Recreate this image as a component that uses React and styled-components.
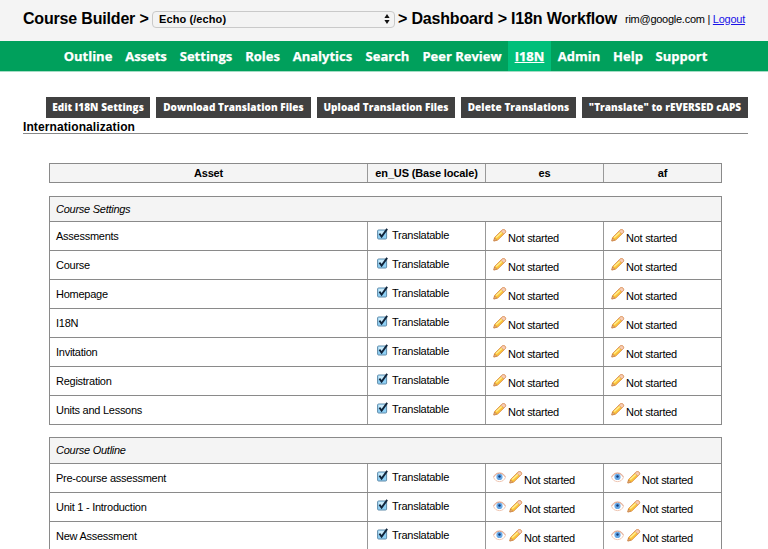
import React from "react";
import styled, { createGlobalStyle, css } from "styled-components";

const GlobalStyle = createGlobalStyle`
  * { box-sizing: border-box; }
  html, body { margin: 0; background: #fff; overflow: hidden; }
  body { font-family: "Liberation Sans", Arial, sans-serif; color: #000; }
`;

const Page = styled.div`
  width: 768px;
  height: 549px;
  overflow: hidden;
`;

const Header = styled.header`
  height: 41px;
  padding: 0 0 3px 23px;
  display: flex;
  align-items: center;
  background: #f4f4f4;
  white-space: nowrap;
`;

const Crumb = styled.span`
  width: ${(p) => p.$width}px;
  font-size: 16px;
  font-weight: bold;
  letter-spacing: -0.18px;
`;

const CourseSelect = styled.div`
  width: 243px;
  height: 17px;
  margin-right: 3px;
  padding: 0 4px 0 6px;
  display: flex;
  align-items: center;
  justify-content: space-between;
  border: 1px solid #c9c9c9;
  border-radius: 4px;
  background: #f3f3f3;
  font-size: 11px;
  font-weight: bold;
  letter-spacing: 0.1px;
`;

const Account = styled.span`
  font-size: 11px;
  line-height: 15px;
  letter-spacing: -0.26px;
`;

const Logout = styled.a`
  color: #1a12e8;
  text-decoration: underline;
`;

const Nav = styled.nav`
  height: 31px;
  padding-left: 57px;
  display: flex;
  background: #00a05c;
  border-bottom: 1px solid #a5dcc4;
`;

const NavItem = styled.a`
  width: ${(p) => p.$width}px;
  height: 30px;
  line-height: 30px;
  text-align: center;
  white-space: nowrap;
  color: #fff;
  font-family: "Open Sans", sans-serif;
  font-size: 13px;
  font-weight: 700;
  -webkit-text-stroke: 0.25px #fff;
  ${(p) => p.$active && css`
    background: #00bf7a;
    text-decoration: underline;
  `}
`;

const Toolbar = styled.div`
  margin: 25px 20px 0 46px;
  display: flex;
  justify-content: space-between;
`;

const ToolButton = styled.button`
  width: ${(p) => p.$width}px;
  height: 21px;
  padding: 0;
  border: 0;
  background: #404040;
  color: #fff;
  font-family: "Open Sans", sans-serif;
  font-size: 10px;
  font-weight: 800;
  letter-spacing: 0.05px;
  line-height: 21px;
  white-space: nowrap;
`;

const Title = styled.h1`
  height: 16px;
  margin: 0 20px 0 23px;
  border-bottom: 1px solid #888;
  font-size: 12px;
  line-height: 18px;
  font-weight: bold;
  letter-spacing: 0.1px;
`;

const Table = styled.div`
  width: 673px;
  margin: ${(p) => p.$top}px 0 0 49px;
  border: 1px solid #8a8a8a;
  border-bottom: 0;
  font-size: 11px;
  letter-spacing: -0.26px;
`;

const Row = styled.div`
  height: ${(p) => p.$height || 29}px;
  display: grid;
  grid-template-columns: 317px 118px 118px 118px;
  grid-template-rows: 100%;
  border-bottom: 1px solid #8a8a8a;
  ${(p) => p.$head && css`
    background: #f4f4f4;
    font-weight: bold;
    text-align: center;
    letter-spacing: -0.15px;
  `}
`;

const GroupName = styled.div`
  height: ${(p) => p.$height}px;
  padding-left: 6px;
  border-bottom: 1px solid #8a8a8a;
  background: #f4f4f4;
  line-height: 24px;
  font-style: italic;
`;

const HeadCell = styled.div`
  border-left: ${(p) => (p.$first ? 0 : 1)}px solid #999;
  line-height: 18px;
`;

const AssetCell = styled.div`
  padding-left: 6px;
  line-height: 28px;
`;

const LocaleCell = styled.div`
  display: flex;
  align-items: flex-start;
  overflow: hidden;
  padding-left: ${(p) => (p.$base ? 9 : 7)}px;
  border-left: 1px solid #999;
`;

const CellText = styled.span`
  margin-left: ${(p) => (p.$base ? 4 : 1)}px;
  line-height: ${(p) => (p.$base ? 26 : 32)}px;
`;

const Icon = styled.svg`
  flex: none;
  margin-top: ${(p) => p.$top}px;
  margin-right: ${(p) => p.$gap || 0}px;
`;

function SelectArrows() {
  return (
    <svg width="6" height="10" viewBox="0 0 6 10">
      <path d="M3 0L5.6 4H.4ZM3 10L.4 6H5.6Z" fill="#111" />
    </svg>
  );
}

function CheckIcon() {
  return (
    <Icon $top={6} width="11" height="12" viewBox="0 0 11 12">
      <rect x=".6" y="2" width="9" height="9" rx="1" fill="#8fd0f5" stroke="#5f8aa8" />
      <path d="M1.4 2.8H7.5V5L2 8Z" fill="#c9eafa" />
      <path d="M2.4 5.6L4.6 8.6L10.2 .9" fill="none" stroke="#10243a" strokeWidth="1.8" />
    </Icon>
  );
}

function PencilIcon() {
  return (
    <Icon $top={7} width="14" height="13" viewBox="0 0 14 13">
      <path d="M.8 12L1.6 8.4L9 1.1Q10.5 0 12 1.1Q13.2 2.5 12.2 3.8L4.8 11Z" fill="#fbc43a" stroke="#d98a45" strokeWidth=".8" />
      <path d="M9 1.1Q10.5 0 12 1.1Q13.2 2.5 12.2 3.8L11 5L7.8 2.3Z" fill="#f7cdb4" stroke="#d9936b" strokeWidth=".6" />
      <path d="M3.2 8.5L8.7 3.4" stroke="#ffef94" strokeWidth="1.4" />
      <path d="M.8 12L1.6 9L3.8 11.3Z" fill="#e9b98c" stroke="#b86d32" strokeWidth=".5" />
    </Icon>
  );
}

function EyeIcon() {
  return (
    <Icon $top={8} $gap={3} width="13" height="11" viewBox="0 0 13 11">
      <path d="M.5 5.2Q2.2 .8 6.5 .8T12.5 5.2Q10.8 9.6 6.5 9.6T.5 5.2Z" fill="#fff" stroke="#efc6b3" strokeWidth="1" />
      <path d="M.8 4.8Q2.8 1.2 6.5 1.2T12.2 4.8" fill="none" stroke="#d89c84" strokeWidth=".9" />
      <circle cx="6.5" cy="4.9" r="3.1" fill="#68a9e6" />
      <circle cx="6.5" cy="4.5" r="1.2" fill="#123a78" />
    </Icon>
  );
}

const navItems = [
  ["Outline", 62], ["Assets", 54], ["Settings", 66], ["Roles", 47],
  ["Analytics", 73], ["Search", 57], ["Peer Review", 92], ["I18N", 43],
  ["Admin", 56], ["Help", 42], ["Support", 65],
];

const actions = [
  ["Edit I18N Settings", 104], ["Download Translation Files", 155],
  ["Upload Translation Files", 138], ["Delete Translations", 115],
  ['"Translate" to rEVERSED cAPS', 166],
];

const groups = [
  { name: "Course Settings", top: 13, nameHeight: 25, viewable: false, rows: ["Assessments", "Course", "Homepage", "I18N", "Invitation", "Registration", "Units and Lessons"] },
  { name: "Course Outline", top: 12, nameHeight: 26, viewable: true, rows: ["Pre-course assessment", "Unit 1 - Introduction", "New Assessment"] },
];

function Status({ viewable }) {
  return (
    <LocaleCell>
      {viewable && <EyeIcon />}
      <PencilIcon />
      <CellText>Not started</CellText>
    </LocaleCell>
  );
}

export default function App() {
  return (
    <Page>
      <GlobalStyle />
      <Header>
        <Crumb $width={129}>Course Builder &gt;</Crumb>
        <CourseSelect>Echo (/echo)<SelectArrows /></CourseSelect>
        <Crumb $width={227}>&gt; Dashboard &gt; I18n Workflow</Crumb>
        <Account>rim@google.com | <Logout>Logout</Logout></Account>
      </Header>
      <Nav>
        {navItems.map(([label, width]) => (
          <NavItem key={label} $width={width} $active={label === "I18N"}>{label}</NavItem>
        ))}
      </Nav>
      <Toolbar>
        {actions.map(([label, width]) => <ToolButton key={label} $width={width}>{label}</ToolButton>)}
      </Toolbar>
      <Title>Internationalization</Title>
      <Table $top={29}>
        <Row $head $height={19}>
          <HeadCell $first>Asset</HeadCell>
          <HeadCell>en_US (Base locale)</HeadCell>
          <HeadCell>es</HeadCell>
          <HeadCell>af</HeadCell>
        </Row>
      </Table>
      {groups.map((group) => (
        <Table key={group.name} $top={group.top}>
          <GroupName $height={group.nameHeight}>{group.name}</GroupName>
          {group.rows.map((asset) => (
            <Row key={asset}>
              <AssetCell>{asset}</AssetCell>
              <LocaleCell $base>
                <CheckIcon />
                <CellText $base>Translatable</CellText>
              </LocaleCell>
              <Status viewable={group.viewable} />
              <Status viewable={group.viewable} />
            </Row>
          ))}
        </Table>
      ))}
    </Page>
  );
}
